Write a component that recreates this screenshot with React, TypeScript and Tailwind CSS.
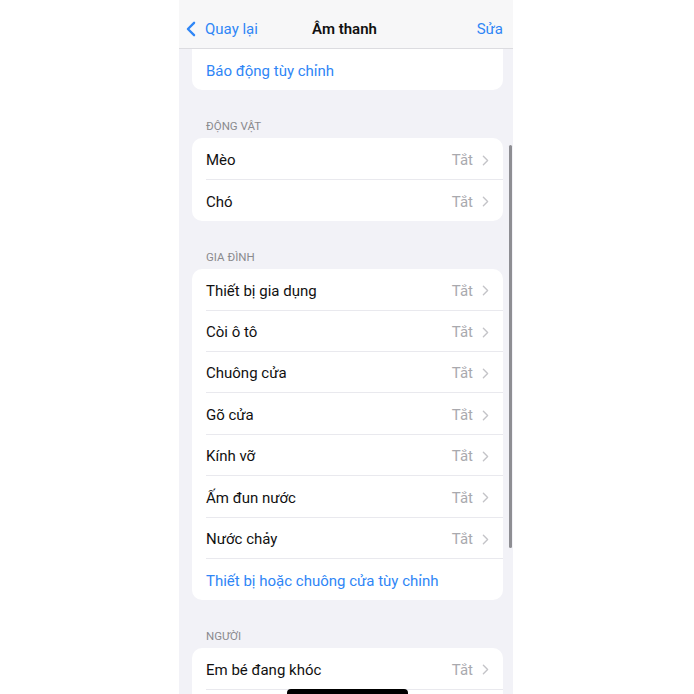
import React from "react";

type Row = { label: string; value?: string; link?: boolean };

const sections: { title?: string; rows: Row[]; first?: boolean; more?: boolean }[] = [
  { first: true, rows: [{ label: "Báo động tùy chỉnh", link: true }] },
  {
    title: "Động vật",
    rows: [
      { label: "Mèo", value: "Tắt" },
      { label: "Chó", value: "Tắt" },
    ],
  },
  {
    title: "Gia đình",
    rows: [
      { label: "Thiết bị gia dụng", value: "Tắt" },
      { label: "Còi ô tô", value: "Tắt" },
      { label: "Chuông cửa", value: "Tắt" },
      { label: "Gõ cửa", value: "Tắt" },
      { label: "Kính vỡ", value: "Tắt" },
      { label: "Ấm đun nước", value: "Tắt" },
      { label: "Nước chảy", value: "Tắt" },
      { label: "Thiết bị hoặc chuông cửa tùy chỉnh", link: true },
    ],
  },
  {
    title: "Người",
    more: true,
    rows: [{ label: "Em bé đang khóc", value: "Tắt" }],
  },
];

const Chevron = ({ className, width = 1.6 }: { className?: string; width?: number }) => (
  <svg viewBox="0 0 8 13" className={className} fill="none">
    <path d="M1.5 1.5 6.5 6.5 1.5 11.5" stroke="currentColor" strokeWidth={width} strokeLinecap="round" strokeLinejoin="round" />
  </svg>
);

const ListRow = ({ row, last }: { row: Row; last: boolean }) => (
  <div className="flex h-[41.4px] items-center pl-[14px]">
    <div
      className={
        "flex h-full flex-1 items-center pr-[14px] pt-[3px] " +
        (last ? "" : "border-b border-[#e9e9ee]")
      }
    >
      <span className={"flex-1 text-[15px] " + (row.link ? "text-[#2f86f6]" : "text-[#111]")}>
        {row.label}
      </span>
      {row.value && (
        <span className="flex items-center gap-[9px] text-[15px] text-[#a9a9ae]">
          {row.value}
          <Chevron className="h-[11px] w-[7px] text-[#c4c4c8]" />
        </span>
      )}
    </div>
  </div>
);

export default function App() {
  return (
    <div
      className="flex h-[694px] w-[694px] overflow-hidden bg-white pl-[179px]"
      style={{ fontFamily: "Roboto, 'Noto Sans', sans-serif" }}
    >
      <div className="relative h-full w-[334px] overflow-hidden bg-[#f2f2f7]">
        <div className="flex h-[49px] items-center border-b border-[#dcdce0] bg-[#f7f7f8] pl-[7px] pr-[10px] pt-[10px]">
          <div className="flex flex-1 items-center gap-[9px] text-[15px] text-[#2f86f6]">
            <Chevron className="h-[16px] w-[10px] rotate-180" width={1.9} />
            <span>Quay lại</span>
          </div>
          <span className="text-[15px] font-semibold text-[#111]">Âm thanh</span>
          <div className="flex flex-1 justify-end text-[15px] text-[#2f86f6]">Sửa</div>
        </div>

        <div className="flex flex-col pl-[13px] pr-[10px]">
          {sections.map((s, i) => (
            <div key={i} className="flex flex-col">
              {s.title && (
                <div className="mt-[28px] mb-[4px] h-[16px] pl-[14px] text-[11.5px] uppercase leading-[16px] text-[#8a8a8e]">
                  {s.title}
                </div>
              )}
              <div className={"bg-white " + (s.first ? "rounded-b-[10px]" : "rounded-[10px]")}>
                {s.rows.map((r, j) => (
                  <ListRow key={j} row={r} last={!s.more && j === s.rows.length - 1} />
                ))}
                {s.more && <div className="h-[40px]" />}
              </div>
            </div>
          ))}
        </div>

        <div className="absolute right-[1px] top-[145px] h-[403px] w-[3px] rounded-full bg-[#8e8e93]" />
        <div className="absolute bottom-[-3px] left-[108px] h-[8px] w-[121px] rounded-full bg-black" />
      </div>
    </div>
  );
}
